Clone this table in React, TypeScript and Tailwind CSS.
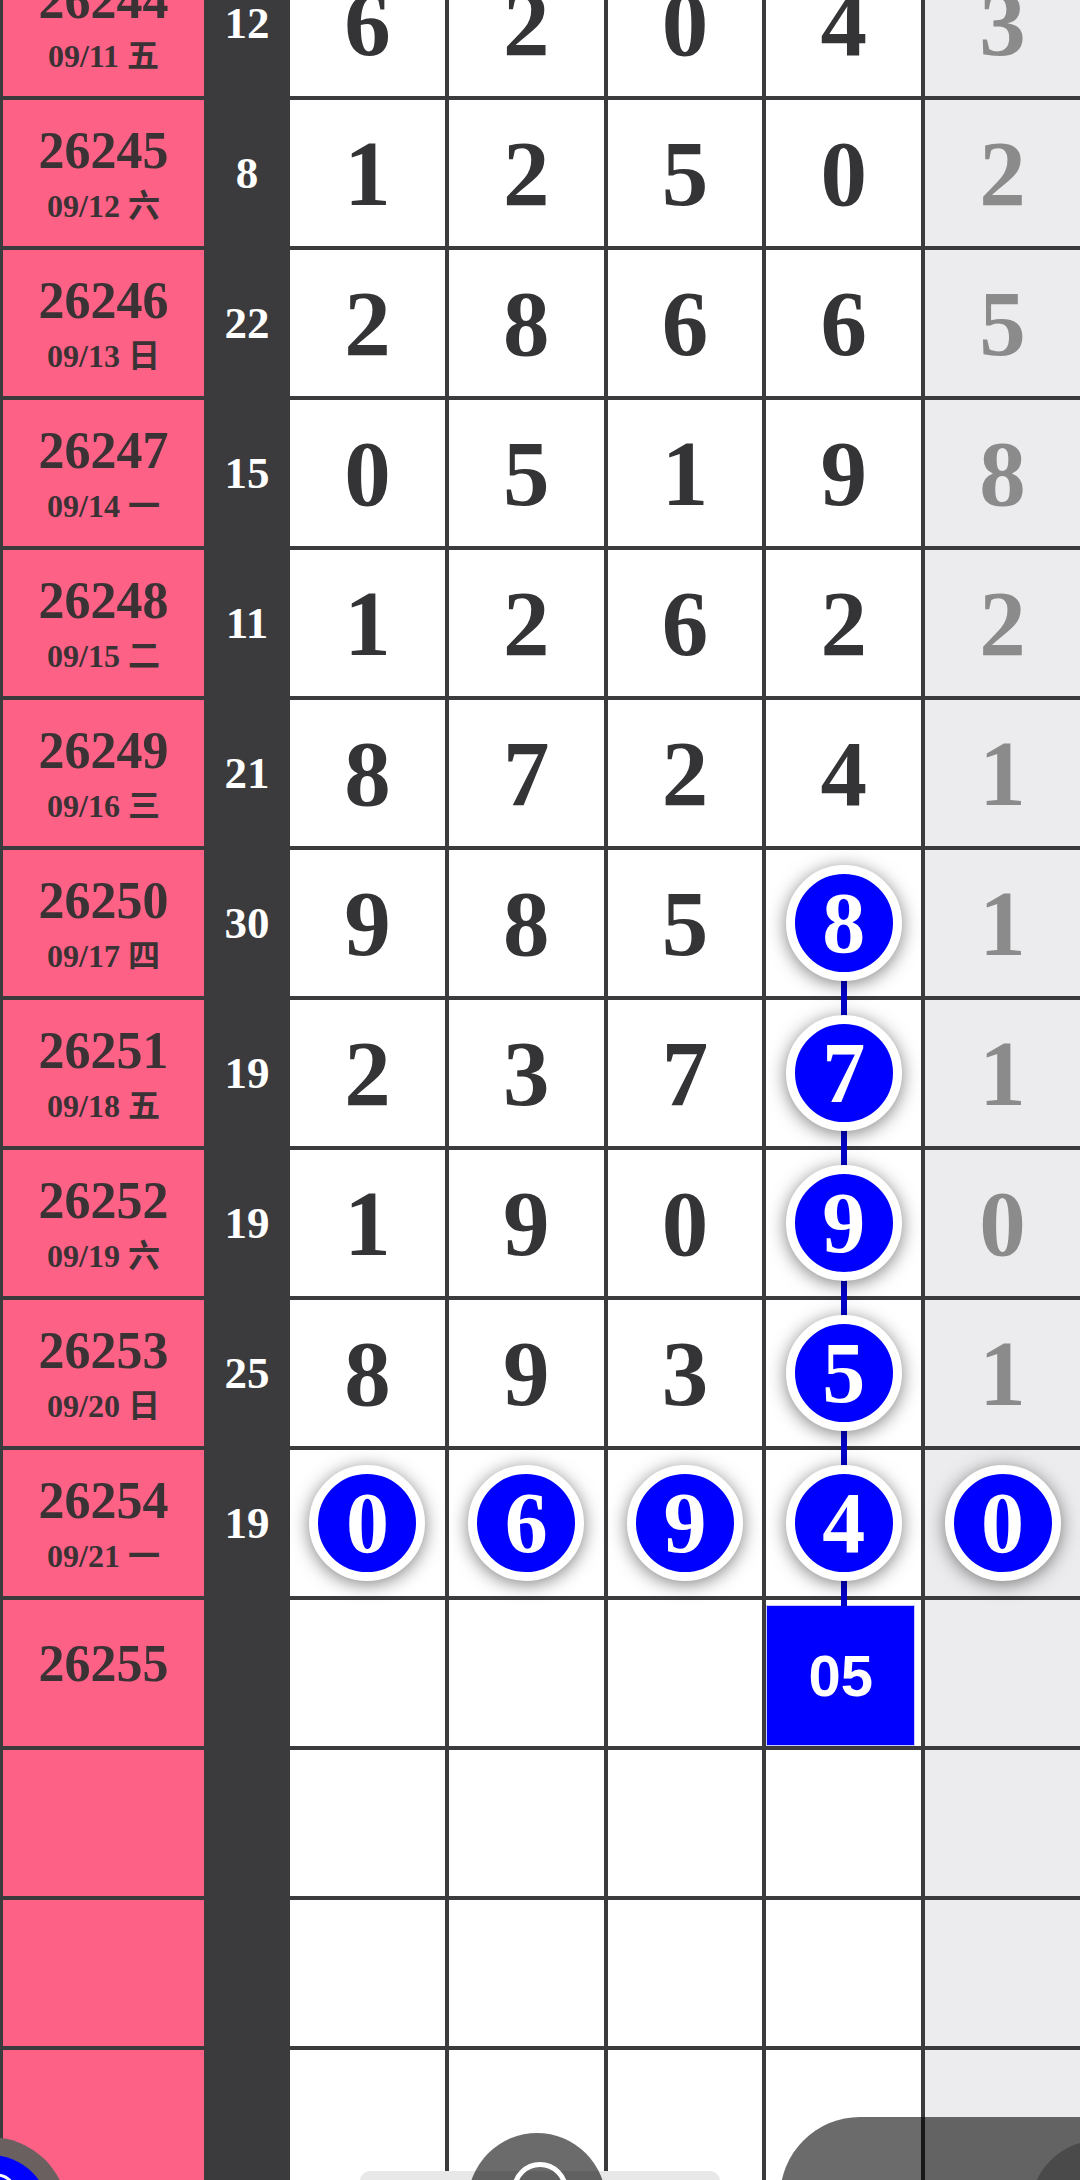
import React from 'react';

type Row = { id: string; date?: string; sum?: number; d?: number[] };

const rows: Row[] = [
  { id: '26244', date: '09/11 五', sum: 12, d: [6, 2, 0, 4, 3] },
  { id: '26245', date: '09/12 六', sum: 8, d: [1, 2, 5, 0, 2] },
  { id: '26246', date: '09/13 日', sum: 22, d: [2, 8, 6, 6, 5] },
  { id: '26247', date: '09/14 一', sum: 15, d: [0, 5, 1, 9, 8] },
  { id: '26248', date: '09/15 二', sum: 11, d: [1, 2, 6, 2, 2] },
  { id: '26249', date: '09/16 三', sum: 21, d: [8, 7, 2, 4, 1] },
  { id: '26250', date: '09/17 四', sum: 30, d: [9, 8, 5, 8, 1] },
  { id: '26251', date: '09/18 五', sum: 19, d: [2, 3, 7, 7, 1] },
  { id: '26252', date: '09/19 六', sum: 19, d: [1, 9, 0, 9, 0] },
  { id: '26253', date: '09/20 日', sum: 25, d: [8, 9, 3, 5, 1] },
  { id: '26254', date: '09/21 一', sum: 19, d: [0, 6, 9, 4, 0] },
  { id: '26255' },
  { id: '' },
  { id: '' },
  { id: '' },
];

// column 4 (index 3) is traced from 26250 down, 26254 is the latest draw
const TRACK_COL = 3;
const TRACK_FROM = 6;
const LATEST = 10;
const NEXT = 11;

function Ball({ n }: { n: number }) {
  return (
    <div className="relative z-10 flex h-[116px] w-[116px] items-center justify-center rounded-full border-[9px] border-white bg-[#0000ff] shadow-[0_3px_18px_rgba(0,0,0,0.5)]">
      <span className="text-[86px] font-bold leading-none text-white">{n}</span>
    </div>
  );
}

function IssueCell({ row }: { row: Row }) {
  return (
    <div className="flex flex-col items-center justify-center bg-[#fe6186] text-[#3a3234]">
      {row.id && (
        <div className={row.date ? 'text-[52px] font-bold leading-[52px]' : 'pb-[19px] text-[52px] font-bold leading-[52px]'}>
          {row.id}
        </div>
      )}
      {row.date && <div className="mt-[13px] text-[32px] font-bold leading-[32px]">{row.date}</div>}
    </div>
  );
}

function DigitCell({ ri, ci, n }: { ri: number; ci: number; n?: number }) {
  const grey = ci === 4;
  const tracked = ci === TRACK_COL && ri >= TRACK_FROM && ri <= LATEST;
  const ball = ri === LATEST || tracked;

  return (
    <div className={grey ? 'relative flex items-center justify-center bg-[#ececee]' : 'relative flex items-center justify-center bg-white'}>
      {tracked && ri === TRACK_FROM && (
        <div className="absolute left-1/2 top-1/2 bottom-0 w-[6px] -translate-x-1/2 bg-[#0000cc]" />
      )}
      {tracked && ri > TRACK_FROM && (
        <div className="absolute left-1/2 top-[-4px] bottom-0 w-[6px] -translate-x-1/2 bg-[#0000cc]" />
      )}

      {ri === NEXT && ci === TRACK_COL && (
        <>
          <div className="absolute left-1/2 top-[-4px] h-[10px] w-[6px] -translate-x-1/2 bg-[#0000cc]" />
          <div className="mr-[6px] mt-[5px] flex h-[141px] flex-1 items-center justify-center self-stretch border border-[#c9c9ff] bg-[#0000ff]">
            <span className="font-['Liberation_Sans',Arial,sans-serif] text-[58px] font-bold leading-none text-white">05</span>
          </div>
        </>
      )}

      {n !== undefined &&
        (ball ? (
          <Ball n={n} />
        ) : (
          <span className={grey ? 'text-[93px] font-bold leading-none text-[#8b8b8b]' : 'text-[93px] font-bold leading-none text-[#343436]'}>
            {n}
          </span>
        ))}
    </div>
  );
}

export default function App() {
  return (
    <div className="relative h-[2180px] w-[1080px] overflow-hidden bg-white font-['Liberation_Serif','Noto_Sans_CJK_TC',serif]">
      {/* ═══ Trend table (scrolled) ═══ */}
      <div className="-mt-[50px] grid auto-rows-[146px] grid-cols-[201px_78px_repeat(5,minmax(0,1fr))] gap-[4px] bg-[#3b3b3d] pl-[3px]">
        {rows.map((row, ri) => (
          <React.Fragment key={ri}>
            <IssueCell row={row} />
            <div className="flex items-center justify-center bg-[#3b3b3d]">
              {row.sum !== undefined && <span className="text-[45px] font-bold leading-none text-white">{row.sum}</span>}
            </div>
            {[0, 1, 2, 3, 4].map((ci) => (
              <DigitCell key={ci} ri={ri} ci={ci} n={row.d?.[ci]} />
            ))}
          </React.Fragment>
        ))}
      </div>

      {/* ═══ Floating buttons ═══ */}
      <div className="absolute left-[-88px] top-[2137px] flex h-[156px] w-[156px] items-center justify-center rounded-full bg-[#6b6060]">
        <div className="h-[120px] w-[120px] rounded-full bg-[#0000ff]" />
      </div>
      <svg className="absolute left-0 top-[2168px]" width="40" height="12" viewBox="0 0 40 12">
        <circle cx="-3" cy="25" r="18" fill="none" stroke="white" strokeWidth="3" />
      </svg>

      <div className="absolute left-[360px] top-[2171px] h-[20px] w-[360px] rounded-[10px] bg-[#e8e8e8]" />
      <div className="absolute left-[468px] top-[2133px] h-[138px] w-[138px] rounded-full bg-black/[0.58]" />
      <div className="absolute left-[512px] top-[2162px] h-[56px] w-[56px] rounded-full border-[5px] border-white" />

      <div className="absolute left-[780px] top-[2117px] h-[200px] w-[400px] rounded-l-[80px] bg-black/[0.58]">
        <div className="ml-[250px] mt-[23px] h-[140px] w-[140px] rounded-full bg-black/[0.25]" />
      </div>
    </div>
  );
}
